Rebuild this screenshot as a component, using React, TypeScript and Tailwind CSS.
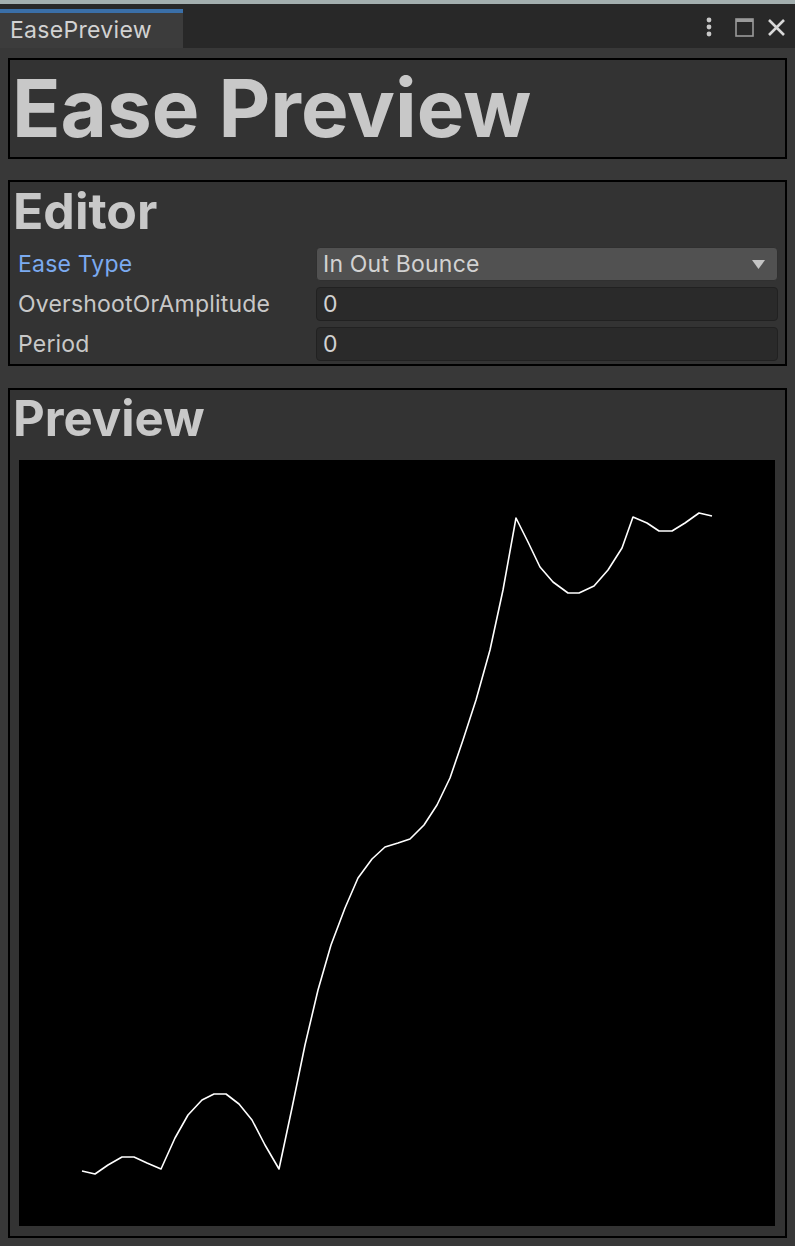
import React from "react";

const curve =
  "82,1171 95,1174 108,1165 122,1157 134,1157 147,1163 161,1169 175,1138 188,1115 202,1100 214,1094 226,1094 239,1104 252,1120 265,1145 279,1169 292,1108 305,1045 318,990 331,945 345,908 358,878 372,859 385,847 398,843 410,839 424,825 437,805 450,778 463,740 476,700 490,650 503,590 516,518 528,542 540,567 553,582 568,593 579,593 594,586 608,570 622,548 633,517 647,523 659,531 672,531 685,523 699,513 712,516";

const font = { fontFamily: "Inter, 'Noto Sans', sans-serif" };

const Field: React.FC<{ label: string; active?: boolean; children: React.ReactNode }> = ({
  label,
  active,
  children,
}) => (
  <div className="flex items-center h-[34px]">
    <div
      className={`w-[298px] shrink-0 text-[23px] leading-none tracking-[0.2px] ${
        active ? "text-[#7baaf0]" : "text-[#c8c8c8]"
      }`}
    >
      {label}
    </div>
    <div className="flex-1 h-full">{children}</div>
  </div>
);

const App: React.FC = () => {
  return (
    <div className="w-[795px] h-[1246px] bg-[#383838] flex flex-col overflow-hidden" style={font}>
      {/* window title strip */}
      <div className="h-[4px] bg-[#a3afaf]" />
      <div className="h-[44px] bg-[#282828] flex items-end relative">
        <div className="w-[183px] h-[39px] bg-[#3c3c3c] border-t-[4px] border-[#3a6fa8] flex items-center pl-[10px]">
          <span className="text-[23px] leading-none tracking-[0.3px] text-[#d2d2d2]">EasePreview</span>
        </div>
        <div className="absolute right-[9px] top-[13px] flex items-center">
          <svg width="8" height="20" viewBox="0 0 8 20" className="mr-[22px]">
            <circle cx="4" cy="3" r="2.4" fill="#c8c8c8" />
            <circle cx="4" cy="10" r="2.4" fill="#c8c8c8" />
            <circle cx="4" cy="17" r="2.4" fill="#c8c8c8" />
          </svg>
          <svg width="19" height="19" viewBox="0 0 19 19" className="mr-[13px]">
            <rect x="1" y="1" width="17" height="17" fill="none" stroke="#9a9a9a" strokeWidth="1.6" />
            <rect x="1" y="1" width="17" height="3" fill="#9a9a9a" />
          </svg>
          <svg width="19" height="19" viewBox="0 0 19 19">
            <path d="M2 2 L17 17 M17 2 L2 17" stroke="#d8d8d8" strokeWidth="2.6" />
          </svg>
        </div>
      </div>

      <div className="flex flex-col px-[8px] pt-[10px]">
        {/* Title */}
        <div className="border-2 border-black bg-[#333333] pt-[8px] pb-[9px] pl-[2px]">
          <h1 className="text-[80px] leading-[80px] font-bold text-[#c8c8c8]">Ease Preview</h1>
        </div>

        {/* Editor */}
        <div className="mt-[21px] border-2 border-black bg-[#333333] pt-[4px] pb-[3px] pl-[8px] pr-[7px]">
          <h2 className="text-[50px] leading-[51px] font-bold text-[#c8c8c8] -ml-[5px]">Editor</h2>
          <div className="mt-[10px] flex flex-col gap-[6px]">
            <Field label="Ease Type" active>
              <div className="h-full rounded-[4px] bg-[#515151] border border-[#303030] flex items-center justify-between pl-[6px] pr-[12px]">
                <span className="text-[23px] leading-none tracking-[0.2px] text-[#d2d2d2]">In Out Bounce</span>
                <svg width="13" height="9" viewBox="0 0 13 9">
                  <path d="M0 0 H13 L6.5 9 Z" fill="#c4c4c4" />
                </svg>
              </div>
            </Field>
            <Field label="OvershootOrAmplitude">
              <div className="h-full rounded-[4px] bg-[#2a2a2a] border border-[#212121] flex items-center pl-[6px]">
                <span className="text-[23px] leading-none text-[#d2d2d2]">0</span>
              </div>
            </Field>
            <Field label="Period">
              <div className="h-full rounded-[4px] bg-[#2a2a2a] border border-[#212121] flex items-center pl-[6px]">
                <span className="text-[23px] leading-none text-[#d2d2d2]">0</span>
              </div>
            </Field>
          </div>
        </div>

        {/* Preview */}
        <div className="mt-[22px] border-2 border-black bg-[#333333] pt-[4px] pb-[10px] pl-[9px] pr-[10px]">
          <h2 className="text-[49px] leading-[50px] font-bold text-[#c8c8c8] -ml-[6px]">Preview</h2>
          <div className="mt-[16px] h-[766px] bg-black">
            <svg width="756" height="766" viewBox="19 460 756 766">
              <polyline points={curve} fill="none" stroke="#ffffff" strokeWidth="1.6" strokeLinejoin="round" />
            </svg>
          </div>
        </div>
      </div>
    </div>
  );
};

export default App;
